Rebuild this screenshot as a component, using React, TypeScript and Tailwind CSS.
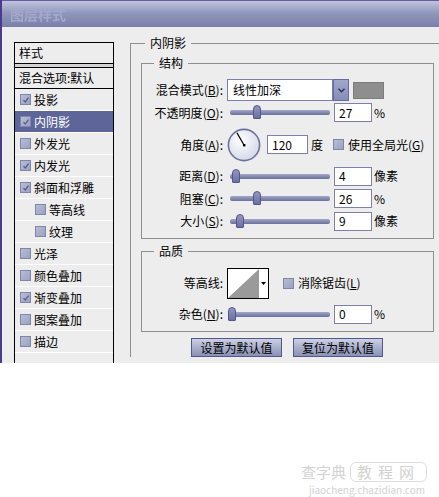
import React from "react";

function Box({ checked }: { checked?: boolean }) {
  return (
    <span className="w-[11px] h-[11px] shrink-0 border border-[#7e86ab] bg-gradient-to-br from-[#b7bed4] to-[#9aa2c0] flex items-center justify-center">
      {checked && (
        <svg width="8" height="8" viewBox="0 0 8 8">
          <path d="M1.5 4.2 L3.3 6 L6.6 1.6" stroke="#5a6094" strokeWidth="1.4" fill="none" />
        </svg>
      )}
    </span>
  );
}

function Key({ text, k }: { text: string; k: string }) {
  return (
    <span className="w-[81px] shrink-0 text-right whitespace-nowrap">
      {text}(<u>{k}</u>):
    </span>
  );
}

function Slider({ thumb }: { thumb: number }) {
  return (
    <div className="ml-[4px] w-[107px] h-[20px] shrink-0 flex items-center pl-[3px]">
      <div className="relative w-[100px] h-[5px] rounded-[2px] bg-gradient-to-b from-[#a3a8c8] to-[#6a7099]">
        <div
          className="absolute top-[-5px] w-[8px] h-[14px] rounded-t-[4px] rounded-b-[1px] border border-[#50568a] bg-gradient-to-b from-[#9197c0] to-[#6b72a2]"
          style={{ left: thumb }}
        />
      </div>
    </div>
  );
}

function Field({ value, w = "w-[38px]" }: { value: string; w?: string }) {
  return (
    <div className={`${w} h-[19px] shrink-0 bg-white border border-[#7d81a8] flex items-center pl-[4px]`}>
      {value}
    </div>
  );
}

function SliderRow({ label, k, thumb, value, unit, h }: { label: string; k: string; thumb: number; value: string; unit: string; h: string }) {
  return (
    <div className={`${h} flex items-center`}>
      <Key text={label} k={k} />
      <Slider thumb={thumb} />
      <Field value={value} />
      <span className="ml-[2px]">{unit}</span>
    </div>
  );
}

const items: { name: string; checked?: boolean; sub?: boolean; active?: boolean }[] = [
  { name: "投影", checked: true },
  { name: "内阴影", checked: true, active: true },
  { name: "外发光" },
  { name: "内发光", checked: true },
  { name: "斜面和浮雕", checked: true },
  { name: "等高线", sub: true },
  { name: "纹理", sub: true },
  { name: "光泽" },
  { name: "颜色叠加" },
  { name: "渐变叠加", checked: true },
  { name: "图案叠加" },
  { name: "描边" },
];

export default function App() {
  return (
    <div className="w-[439px] h-[497px] bg-white overflow-hidden text-[12px] leading-[16px] text-black font-['Noto_Sans_CJK_SC','Noto_Sans',sans-serif]">
      <div className="h-[363px] flex flex-col bg-[#ededed] border-l-[2px] border-[#4b3b8c] overflow-hidden">
        {/* title bar */}
        <div className="h-[27px] shrink-0 border-t border-[#6a58a0] bg-gradient-to-b from-[#c0c4de] via-[#8e94ba] to-[#7a80a8] flex items-center pl-[8px]">
          <span className="text-[14px] font-bold text-[#a4a8ca] blur-[0.6px]">图层样式</span>
        </div>

        <div className="flex flex-1 min-h-0">
          {/* style list */}
          <div className="ml-[12px] mt-[15px] w-[100px] h-[340px] shrink-0 border border-black flex flex-col">
            <div className="h-[20px] flex items-center pl-[4px]">样式</div>
            <div className="h-[5px] border-t border-b border-black bg-[#d2d2d2]" />
            <div className="h-[21px] flex items-center pl-[4px] border-b border-black whitespace-nowrap">混合选项:默认</div>
            {items.map((it) => (
              <div
                key={it.name}
                className={`h-[22px] shrink-0 flex items-center gap-[3px] border-b border-white ${it.sub ? "pl-[20px]" : "pl-[5px]"} ${it.active ? "bg-[#5d6599] text-white" : ""}`}
              >
                <Box checked={it.checked} />
                <span>{it.name}</span>
              </div>
            ))}
          </div>

          {/* settings */}
          <div className="ml-[16px] pt-[8px] flex-1 min-w-0">
            <fieldset className="border-t border-l border-[#8f8f8f] pl-[10px] pt-[4px]">
              <legend className="ml-[4px] px-[5px]">内阴影</legend>

              <fieldset className="w-[293px] border border-[#8f8f8f] pt-[8px] pb-[6px]">
                <legend className="ml-[12px] px-[5px]">结构</legend>

                <div className="h-[22px] flex items-center">
                  <Key text="混合模式" k="B" />
                  <div className="ml-[4px] w-[106px] h-[22px] bg-white border border-[#7a80aa] flex items-center pl-[5px]">线性加深</div>
                  <div className="w-[16px] h-[22px] border border-[#666c9e] bg-gradient-to-b from-[#a2a8cb] to-[#868db6] flex items-center justify-center">
                    <svg width="7" height="5" viewBox="0 0 7 5">
                      <path d="M0.5 0.8 L3.5 3.8 L6.5 0.8" stroke="#262a66" strokeWidth="1.3" fill="none" />
                    </svg>
                  </div>
                  <div className="ml-[4px] w-[31px] h-[17px] bg-[#8e8e8e] border border-[#7c7c7c]" />
                </div>

                <SliderRow label="不透明度" k="O" thumb={23} value="27" unit="%" h="h-[23px]" />

                <div className="h-[41px] flex items-center">
                  <Key text="角度" k="A" />
                  <svg className="ml-[4px] shrink-0" width="34" height="34" viewBox="0 0 34 34">
                    <defs>
                      <radialGradient id="dial" cx="40%" cy="35%" r="70%">
                        <stop offset="0%" stopColor="#ffffff" />
                        <stop offset="100%" stopColor="#d3d7e7" />
                      </radialGradient>
                    </defs>
                    <circle cx="17" cy="17" r="15.6" fill="url(#dial)" stroke="#6b719f" strokeWidth="1.6" />
                    <line x1="17" y1="17" x2="10" y2="4.9" stroke="#000" strokeWidth="1.2" />
                    <rect x="16" y="16" width="2.4" height="2.4" fill="#000" />
                  </svg>
                  <div className="ml-[6px]">
                    <Field value="120" w="w-[41px]" />
                  </div>
                  <span className="ml-[3px]">度</span>
                  <span className="ml-[10px]"><Box /></span>
                  <span className="ml-[4px] whitespace-nowrap">使用全局光(<u>G</u>)</span>
                </div>

                <SliderRow label="距离" k="D" thumb={2} value="4" unit="像素" h="h-[22px]" />
                <SliderRow label="阻塞" k="C" thumb={23} value="26" unit="%" h="h-[23px]" />
                <SliderRow label="大小" k="S" thumb={6} value="9" unit="像素" h="h-[22px]" />
              </fieldset>

              <fieldset className="mt-[4px] w-[293px] border border-[#8f8f8f] pt-[7px] pb-[6px]">
                <legend className="ml-[12px] px-[5px]">品质</legend>

                <div className="h-[34px] flex items-center">
                  <span className="w-[81px] shrink-0 text-right">等高线:</span>
                  <div className="ml-[4px] w-[42px] h-[31px] shrink-0 border border-black bg-white flex">
                    <svg width="31" height="29" viewBox="0 0 31 29">
                      <polygon points="0,29 31,0 31,29" fill="#9a9a9a" />
                    </svg>
                    <div className="flex-1 flex items-center justify-center">
                      <svg width="5" height="3" viewBox="0 0 5 3">
                        <polygon points="0,0 5,0 2.5,3" fill="#000" />
                      </svg>
                    </div>
                  </div>
                  <span className="ml-[14px]"><Box /></span>
                  <span className="ml-[4px] whitespace-nowrap">消除锯齿(<u>L</u>)</span>
                </div>

                <div className="mt-[3px]">
                  <SliderRow label="杂色" k="N" thumb={-2} value="0" unit="%" h="h-[22px]" />
                </div>
              </fieldset>

              <div className="mt-[6px] ml-[50px] flex gap-[11px]">
                <button className="w-[91px] h-[19px] border border-[#50578a] bg-gradient-to-b from-[#cdd1e3] via-[#a9afcb] to-[#8a91b6] flex items-center justify-center">设置为默认值</button>
                <button className="w-[90px] h-[19px] border border-[#50578a] bg-gradient-to-b from-[#cdd1e3] via-[#a9afcb] to-[#8a91b6] flex items-center justify-center">复位为默认值</button>
              </div>
            </fieldset>
          </div>
        </div>
      </div>

      {/* watermark */}
      <div className="flex flex-col items-end pr-[12px] pt-[99px] text-[#d2d2d2]">
        <div className="flex items-center text-[15px] leading-[20px]">
          <span>查字典</span>
          <span className="ml-[4px] px-[6px] border border-[#dedede] rounded-[6px] tracking-[6px] leading-[18px]">教程网</span>
        </div>
        <div className="mt-[1px] text-[10px] leading-[13px] pr-[2px]">jiaocheng.chazidian.com</div>
      </div>
    </div>
  );
}
